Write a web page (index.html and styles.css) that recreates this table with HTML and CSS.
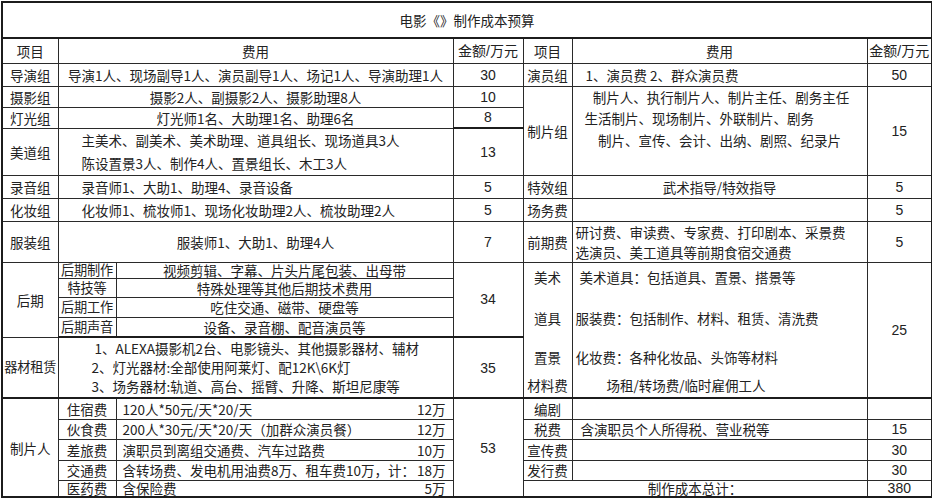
FILE: index.html
```html
<!DOCTYPE html>
<html lang="zh-CN">
<head>
<meta charset="utf-8">
<title>电影制作成本预算</title>
<link rel="stylesheet" href="styles.css">
</head>
<body>
<table class="sheet">
  <colgroup>
    <col class="c1"><col class="c2a"><col class="c2b"><col class="c3"><col class="c4"><col class="c5"><col class="c6">
  </colgroup>
  <tr class="h-title"><td colspan="7" class="title">电影《》制作成本预算</td></tr>
  <tr class="h-head">
    <td>项目</td><td colspan="2">费用</td><td class="num">金额/万元</td>
    <td>项目</td><td>费用</td><td class="num">金额/万元</td>
  </tr>
  <tr class="h1">
    <td>导演组</td><td colspan="2">导演1人、现场副导1人、演员副导1人、场记1人、导演助理1人</td><td class="num">30</td>
    <td>演员组</td><td class="left pad13">1、演员费 2、群众演员费</td><td class="num">50</td>
  </tr>
  <tr class="h2">
    <td>摄影组</td><td colspan="2">摄影2人、副摄影2人、摄影助理8人</td><td class="num">10</td>
    <td rowspan="3">制片组</td>
    <td rowspan="3" class="top multi22">
      <div>&nbsp;制片人、执行制片人、制片主任、剧务主任</div>
      <div class="left pad12">生活制片、现场制片、外联制片、剧务</div>
      <div>制片、宣传、会计、出纳、剧照、纪录片</div>
    </td>
    <td rowspan="3" class="num">15</td>
  </tr>
  <tr class="h3">
    <td>灯光组</td><td colspan="2">灯光师1名、大助理1名、助理6名</td><td class="num thick-b">8</td>
  </tr>
  <tr class="h4">
    <td>美道组</td>
    <td colspan="2" class="left pad23 multi23">
      <div>主美术、副美术、美术助理、道具组长、现场道具3人</div>
      <div>陈设置景3人、制作4人、置景组长、木工3人</div>
    </td>
    <td class="num">13</td>
  </tr>
  <tr class="h5">
    <td>录音组</td><td colspan="2" class="left pad23">录音师1、大助1、助理4、录音设备</td><td class="num">5</td>
    <td>特效组</td><td>武术指导/特效指导</td><td class="num">5</td>
  </tr>
  <tr class="h6">
    <td>化妆组</td><td colspan="2" class="left pad23">化妆师1、梳妆师1、现场化妆助理2人、梳妆助理2人</td><td class="num">5</td>
    <td>场务费</td><td></td><td class="num">5</td>
  </tr>
  <tr class="h7">
    <td>服装组</td><td colspan="2">服装师1、大助1、助理4人</td><td class="num">7</td>
    <td>前期费</td>
    <td class="left pad3 multi20">
      <div>研讨费、审读费、专家费、打印剧本、采景费</div>
      <div>选演员、美工道具等前期食宿交通费</div>
    </td>
    <td class="num">5</td>
  </tr>
  <tr class="h8">
    <td rowspan="4">后期</td><td class="sub">后期制作</td><td>视频剪辑、字幕、片头片尾包装、出母带</td>
    <td rowspan="4" class="num thick-b">34</td>
    <td rowspan="5" class="top">
      <div class="art l1">美术</div>
      <div class="art l2">道具</div>
      <div class="art l3">置景</div>
      <div class="art l4">材料费</div>
    </td>
    <td rowspan="5" class="top left">
      <div class="art l1 pad7">美术道具：包括道具、置景、搭景等</div>
      <div class="art l2 pad3">服装费：包括制作、材料、租赁、清洗费</div>
      <div class="art l3 pad3">化妆费：各种化妆品、头饰等材料</div>
      <div class="art l4 pad34">场租/转场费/临时雇佣工人</div>
    </td>
    <td rowspan="5" class="num">25</td>
  </tr>
  <tr class="h9"><td class="sub">特技等</td><td>特殊处理等其他后期技术费用</td></tr>
  <tr class="h10"><td class="sub">后期工作</td><td>吃住交通、磁带、硬盘等</td></tr>
  <tr class="h11 thick-row"><td class="sub">后期声音</td><td>设备、录音棚、配音演员等</td></tr>
  <tr class="h12">
    <td class="sub">器材租赁</td>
    <td colspan="2" class="left pad33 multi19">
      <div>&nbsp;1、ALEXA摄影机2台、电影镜头、其他摄影器材、辅材</div>
      <div>2、灯光器材:全部使用阿莱灯、配12K\6K灯</div>
      <div>3、场务器材:轨道、高台、摇臂、升降、斯坦尼康等</div>
    </td>
    <td class="num">35</td>
  </tr>
  <tr class="h13 thick-top">
    <td rowspan="5">制片人</td><td>住宿费</td>
    <td><div class="split"><span>120人*50元/天*20/天</span><span>12万</span></div></td>
    <td rowspan="5" class="num">53</td>
    <td>编剧</td><td></td><td></td>
  </tr>
  <tr class="h14">
    <td>伙食费</td><td><div class="split"><span>200人*30元/天*20/天（加群众演员餐）</span><span>12万</span></div></td>
    <td>税费</td><td class="left pad8">含演职员个人所得税、营业税等</td><td class="num">15</td>
  </tr>
  <tr class="h15">
    <td>差旅费</td><td><div class="split"><span>演职员到离组交通费、汽车过路费</span><span>10万</span></div></td>
    <td>宣传费</td><td></td><td class="num">30</td>
  </tr>
  <tr class="h16">
    <td>交通费</td><td><div class="split"><span>含转场费、发电机用油费8万、租车费10万，计：</span><span>18万</span></div></td>
    <td>发行费</td><td></td><td class="num">30</td>
  </tr>
  <tr class="h17">
    <td>医药费</td><td><div class="split"><span>含保险费</span><span>5万</span></div></td>
    <td colspan="2">制作成本总计：</td><td class="num">380</td>
  </tr>
</table>
</body>
</html>
```

FILE: styles.css
```css
html, body {
  margin: 0;
  padding: 0;
  background: #ffffff;
}

body {
  font-family: "Noto Sans CJK SC", "Noto Sans", sans-serif;
  font-size: 13.5px;
  color: #222222;
  padding: 1px 0 0 1px;
}

.sheet {
  border-collapse: collapse;
  table-layout: fixed;
  width: 930px;
  border: 2px solid #1c1c1c;
}

.c1 { width: 56px; }
.c2a { width: 58px; }
.c2b { width: 337px; }
.c3 { width: 70px; }
.c4 { width: 49px; }
.c5 { width: 295px; }
.c6 { width: 65px; }

.sheet td {
  border: 1px solid #2a2a2a;
  padding: 0;
  text-align: center;
  vertical-align: middle;
  line-height: 14px;
  white-space: nowrap;
  overflow: hidden;
}

.sheet td.sub {
  font-size: 13.2px;
  letter-spacing: -0.2px;
}

.sheet td.title {
  border-bottom: 2px solid #1c1c1c;
}

.sheet td.num {
  font-family: "Liberation Sans", "Noto Sans CJK SC", sans-serif;
  font-size: 14px;
}

.sheet td.left { text-align: left; }
.sheet td.top { vertical-align: top; }

.pad3 { padding-left: 3px !important; }
.pad7 { padding-left: 7px !important; }
.pad8 { padding-left: 8px !important; }
.pad12 { padding-left: 12px !important; }
.pad13 { padding-left: 13px !important; }
.pad23 { padding-left: 23px !important; }
.pad33 { padding-left: 33px !important; }
.pad34 { padding-left: 34px !important; }

div.left { text-align: left; }

.multi22 { line-height: 21.5px !important; }
.multi23 { line-height: 23px !important; }
.multi20 { line-height: 20px !important; }
.multi19 { line-height: 19px !important; }

.art { line-height: 20px; }
.art.l1 { margin-top: 4px; }
.art.l2 { margin-top: 21px; }
.art.l3 { margin-top: 19px; }
.art.l4 { margin-top: 8px; }

.split {
  display: flex;
  justify-content: space-between;
  padding: 0 7px 0 6px;
  white-space: nowrap;
}

.sheet td.thick-b { border-bottom: 2px solid #1c1c1c; }
.thick-row td { border-bottom: 2px solid #1c1c1c; }
.thick-top td { border-top: 2px solid #1c1c1c; }

.h-title { height: 36px; }
.h-head { height: 25px; }
.h1 { height: 23px; }
.h2 { height: 21px; }
.h3 { height: 21px; }
.h4 { height: 46px; }
.h5 { height: 23px; }
.h6 { height: 23px; }
.h7 { height: 41px; }
.h8 { height: 16px; }
.h9 { height: 19px; }
.h10 { height: 20px; }
.h11 { height: 20px; }
.h12 { height: 61px; }
.h13 { height: 21px; }
.h14 { height: 20px; }
.h15 { height: 21px; }
.h16 { height: 20px; }
.h17 { height: 17px; }
```
